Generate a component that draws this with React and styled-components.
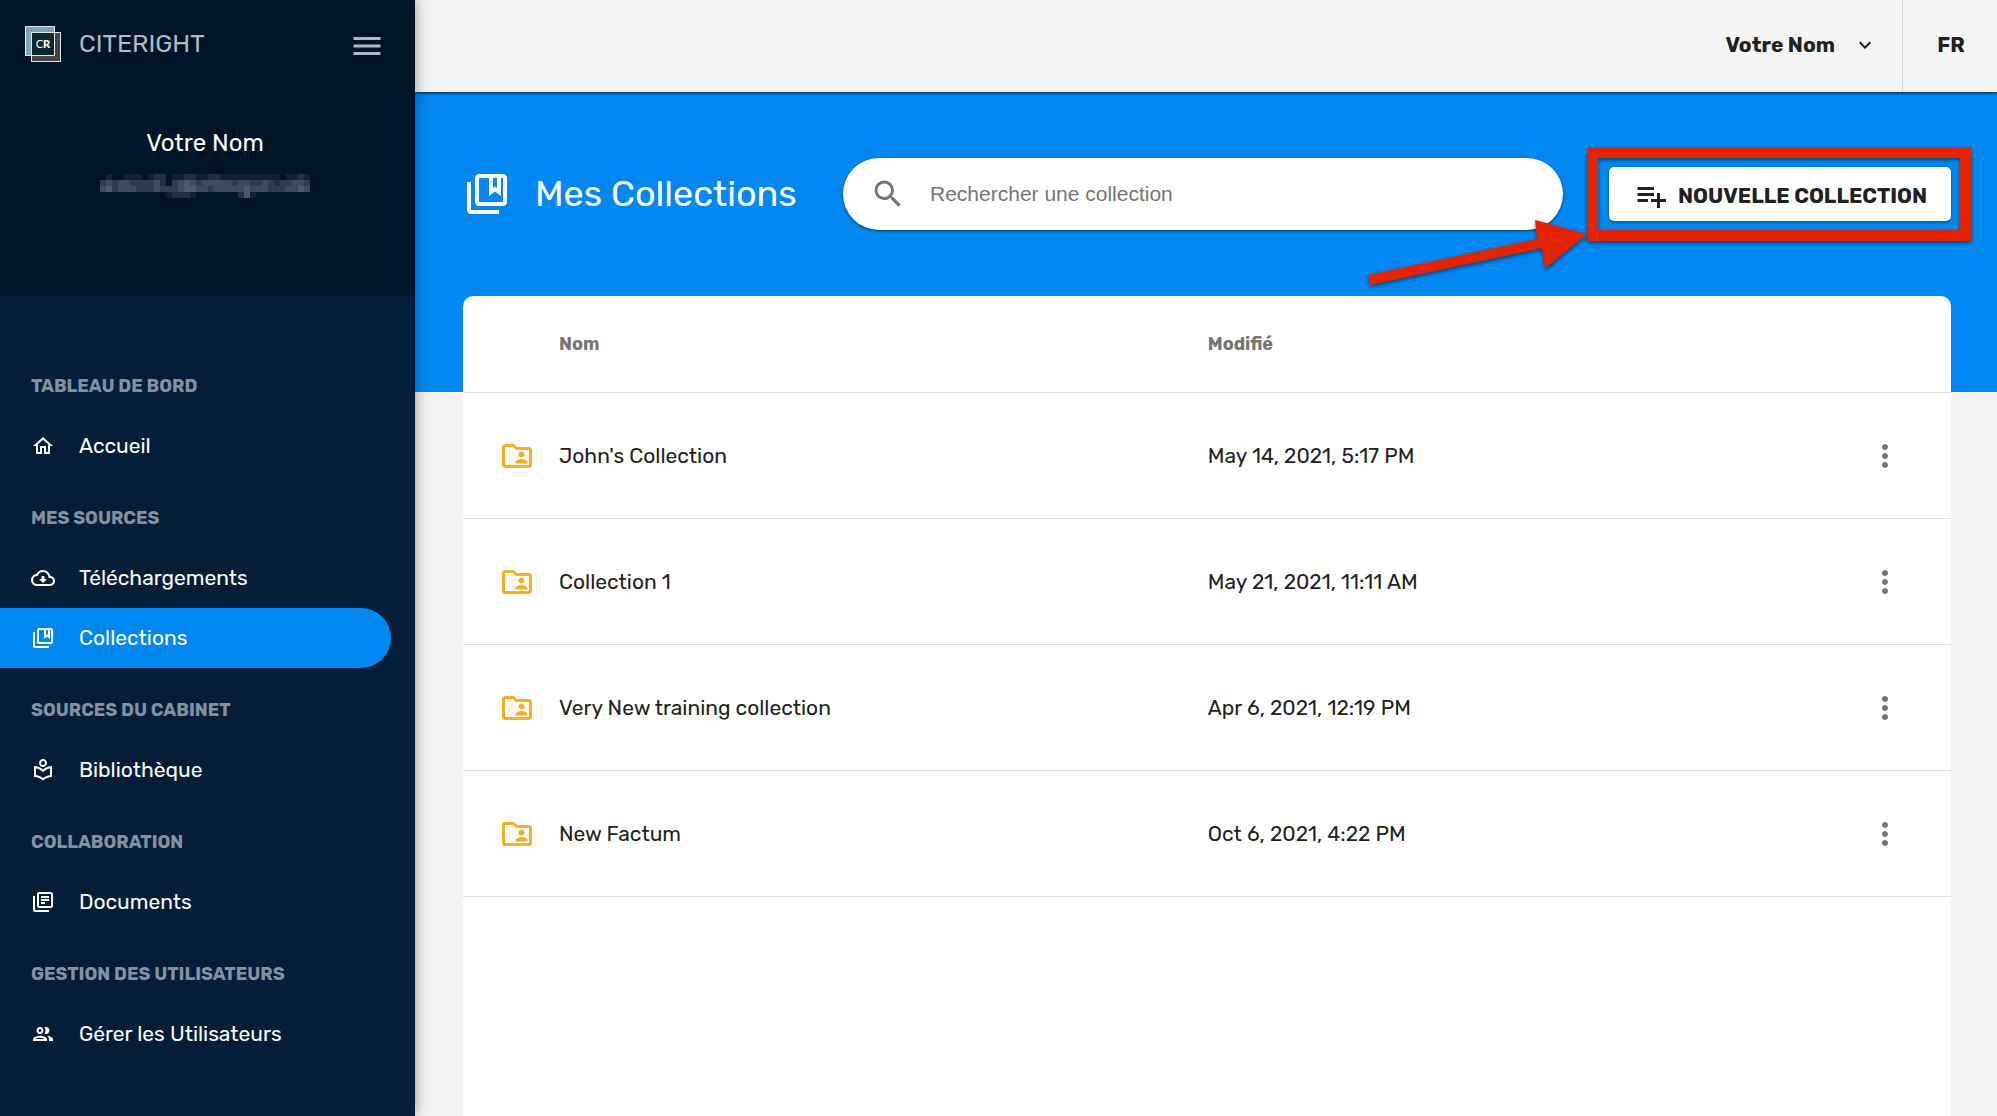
import styled, { createGlobalStyle, css } from "styled-components";
import { useState } from "react";
import {
  MdExpandMore,
  MdMenu,
  MdMoreVert,
  MdOutlineCloudDownload,
  MdOutlineCollectionsBookmark,
  MdOutlineFolderShared,
  MdOutlineGroup,
  MdOutlineHome,
  MdOutlineLibraryBooks,
  MdOutlineLocalLibrary,
  MdPlaylistAdd,
  MdSearch,
} from "react-icons/md";

const GlobalStyle = createGlobalStyle`
  *, *::before, *::after {
    box-sizing: border-box;
  }
  body {
    margin: 0;
    background: #f4f4f4;
    color: #212121;
    font-family: Rubik, Roboto, "Liberation Sans", sans-serif;
    font-size: 21px;
    line-height: 28px;
  }
  button, input {
    font: inherit;
    color: inherit;
  }
`;

const Page = styled.div`
  display: flex;
  min-height: 100vh;
`;

const plainButton = css`
  display: flex;
  align-items: center;
  padding: 0;
  border: none;
  background: none;
  cursor: pointer;
`;

const IconButton = styled.button`
  ${plainButton}
  color: ${props => props.$color};
  font-size: 36px;
`;

/* Sidebar */

const Sidebar = styled.aside`
  position: relative;
  z-index: 2;
  flex: 0 0 415px;
  background: #041e39;
  color: #ffffff;
  box-shadow: 0 0 14px rgba(0, 0, 0, 0.4);
`;

const SidebarHeader = styled.header`
  height: 296px;
  padding: 26px 30px 0 25px;
  background: #001429;
`;

const BrandRow = styled.div`
  display: flex;
  justify-content: space-between;
  align-items: flex-start;
  height: 38px;

  ${IconButton} {
    align-self: flex-end;
  }
`;

const Brand = styled.a`
  display: flex;
  align-items: center;
  gap: 18px;
  color: #b2b9c0;
  font-size: 25px;
  text-decoration: none;
`;

const Profile = styled.div`
  display: flex;
  flex-direction: column;
  align-items: center;
  gap: 17px;
  padding-top: 65px;
  font-size: 24px;
`;

const Nav = styled.nav`
  padding: 48px 24px 24px 0;
`;

const NavTitle = styled.h2`
  height: 72px;
  margin: 0;
  padding: 28px 0 0 31px;
  color: #83909e;
  font-size: 18px;
  font-weight: 700;
  text-transform: uppercase;
`;

const NavLink = styled.a`
  display: flex;
  align-items: center;
  gap: 24px;
  height: 60px;
  padding-left: 31px;
  border-radius: 0 30px 30px 0;
  background: ${props => (props.$active ? "#0388f2" : "transparent")};
  color: #ffffff;
  text-decoration: none;

  svg {
    font-size: 24px;
  }
`;

/* Main column */

const Content = styled.div`
  display: flex;
  flex: 1;
  flex-direction: column;
  min-width: 0;
`;

const TopBar = styled.header`
  position: relative;
  z-index: 1;
  display: flex;
  justify-content: flex-end;
  height: 92px;
  background: #f4f4f4;
  box-shadow: 0 1px 3px rgba(0, 0, 0, 0.8);
`;

const UserButton = styled.button`
  ${plainButton}
  gap: 18px;
  padding: 0 25px 2px 0;
  font-weight: 700;

  svg {
    font-size: 24px;
  }
`;

const LangButton = styled.button`
  ${plainButton}
  justify-content: center;
  width: 95px;
  padding: 0 0 2px 2px;
  border-left: 1px solid #d2d2d2;
  font-weight: 700;
`;

const Hero = styled.section`
  display: grid;
  grid-template-columns: 380px minmax(0, 1fr) 342px;
  align-items: start;
  height: 300px;
  padding: 66px 46px 0 48px;
  background: #0388f2;
`;

const Title = styled.h1`
  display: flex;
  align-items: center;
  gap: 24px;
  height: 72px;
  margin: 0;
  color: #ffffff;
  font-size: 36px;
  font-weight: 400;

  svg {
    font-size: 48px;
  }
`;

const SearchBox = styled.label`
  display: flex;
  align-items: center;
  gap: 24px;
  height: 72px;
  margin-right: 46px;
  padding: 0 27px;
  border-radius: 36px;
  background: #ffffff;
  color: #757575;
  box-shadow: 0 1px 3px rgba(0, 0, 0, 0.6);

  svg {
    flex: none;
    font-size: 36px;
  }
`;

const SearchInput = styled.input`
  flex: 1;
  min-width: 0;
  padding: 0;
  border: none;
  outline: none;
  background: none;
  color: #212121;
  font-family: "Liberation Sans", Arial, sans-serif;

  &::placeholder {
    color: #757575;
    opacity: 1;
  }
`;

const Callout = styled.div`
  position: relative;
  display: flex;
  align-items: center;
  height: 72px;

  &::after {
    content: "";
    position: absolute;
    inset: -11px -20px -11px -22px;
    border: 11px solid #e22400;
    filter: drop-shadow(0 2px 2px rgba(0, 0, 0, 0.5));
    pointer-events: none;
  }
`;

const CalloutArrow = styled.svg`
  position: absolute;
  top: 58px;
  right: 364px;
  z-index: 1;
  filter: drop-shadow(0 2px 2px rgba(0, 0, 0, 0.5));
  pointer-events: none;
`;

const NewButton = styled.button`
  ${plainButton}
  flex: 1;
  justify-content: center;
  gap: 9px;
  height: 54px;
  padding-top: 4px;
  border-radius: 5px;
  background: #ffffff;
  font-weight: 700;
  text-transform: uppercase;
  white-space: nowrap;
  box-shadow: 0 1px 3px rgba(0, 0, 0, 0.5);

  svg {
    font-size: 36px;
  }
`;

const Card = styled.main`
  flex: 1;
  margin: -96px 46px 0 48px;
  border-radius: 10px 10px 0 0;
  background: #ffffff;
`;

const Table = styled.table`
  width: 100%;
  border-collapse: separate;
  border-spacing: 0;
  table-layout: fixed;
`;

const HeadCell = styled.th`
  width: ${props => props.$width};
  height: 97px;
  padding: 0;
  border-bottom: 1px solid #dddddd;
  color: #757575;
  font-size: 18px;
  font-weight: 700;
  text-align: left;
`;

const Cell = styled.td`
  height: 126px;
  padding: ${props => (props.$icon ? "0 0 0 36px" : "0")};
  border-bottom: 1px solid #dddddd;

  > svg {
    display: block;
    color: #fab01e;
    font-size: 36px;
  }

  ${IconButton} {
    margin: 0 auto;
  }
`;

const sections = [
  { title: "Tableau de bord", links: [{ label: "Accueil", icon: MdOutlineHome }] },
  {
    title: "Mes sources",
    links: [
      { label: "Téléchargements", icon: MdOutlineCloudDownload },
      { label: "Collections", icon: MdOutlineCollectionsBookmark },
    ],
  },
  { title: "Sources du cabinet", links: [{ label: "Bibliothèque", icon: MdOutlineLocalLibrary }] },
  { title: "Collaboration", links: [{ label: "Documents", icon: MdOutlineLibraryBooks }] },
  { title: "Gestion des utilisateurs", links: [{ label: "Gérer les Utilisateurs", icon: MdOutlineGroup }] },
];

const collections = [
  { name: "John's Collection", modified: "May 14, 2021, 5:17 PM" },
  { name: "Collection 1", modified: "May 21, 2021, 11:11 AM" },
  { name: "Very New training collection", modified: "Apr 6, 2021, 12:19 PM" },
  { name: "New Factum", modified: "Oct 6, 2021, 4:22 PM" },
];

// opacity of each block of the masked address, 0-9
const mask = [
  "01001110122011221122111111111101121",
  "34344333342034543444443443343233443",
  "45344433343334554434444454443334454",
  "00000000000122210000000251000000000",
];

function Logo() {
  return (
    <svg width="36" height="36" viewBox="0 0 36 36" aria-hidden="true">
      <rect x="0.5" y="0.5" width="29" height="29" fill="#7fa4b5" />
      <rect x="6.5" y="6.5" width="29" height="29" fill="#454545" />
      <rect x="6.5" y="6.5" width="23" height="23" fill="#0c262f" />
      <rect x="0.5" y="0.5" width="29" height="29" fill="none" stroke="#dfe8ee" />
      <rect x="6.5" y="6.5" width="29" height="29" fill="none" stroke="#dfe8ee" />
      <text x="18" y="22" textAnchor="middle" fontFamily="Lato, sans-serif" fontSize="11" fill="#ffffff">
        <tspan fontWeight="400">C</tspan>
        <tspan fontWeight="900">R</tspan>
      </text>
    </svg>
  );
}

function MaskedEmail() {
  return (
    <svg width="210" height="24" viewBox="0 0 210 24" shapeRendering="crispEdges" role="img" aria-label="Adresse masquée">
      {mask.map((line, y) =>
        line.split("").map((level, x) => (
          <rect key={`${x}-${y}`} x={x * 6} y={y * 6} width="6" height="6" fill="#ffffff" opacity={level * 0.06} />
        ))
      )}
    </svg>
  );
}

export default function App() {
  const [active, setActive] = useState("Collections");
  const [search, setSearch] = useState("");

  const rows = collections.filter(c => c.name.toLowerCase().includes(search.toLowerCase()));

  return (
    <Page>
      <GlobalStyle />
      <Sidebar>
        <SidebarHeader>
          <BrandRow>
            <Brand href="#">
              <Logo />
              CITERIGHT
            </Brand>
            <IconButton $color="#b2b9c0" aria-label="Menu">
              <MdMenu />
            </IconButton>
          </BrandRow>
          <Profile>
            Votre Nom
            <MaskedEmail />
          </Profile>
        </SidebarHeader>
        <Nav>
          {sections.map(section => (
            <div key={section.title}>
              <NavTitle>{section.title}</NavTitle>
              {section.links.map(({ label, icon: Icon }) => (
                <NavLink key={label} href="#" $active={label === active} onClick={() => setActive(label)}>
                  <Icon />
                  {label}
                </NavLink>
              ))}
            </div>
          ))}
        </Nav>
      </Sidebar>
      <Content>
        <TopBar>
          <UserButton>
            Votre Nom
            <MdExpandMore />
          </UserButton>
          <LangButton>FR</LangButton>
        </TopBar>
        <Hero>
          <Title>
            <MdOutlineCollectionsBookmark />
            Mes Collections
          </Title>
          <SearchBox>
            <MdSearch />
            <SearchInput
              type="text"
              aria-label="Rechercher une collection"
              placeholder="Rechercher une collection"
              value={search}
              onChange={e => setSearch(e.target.value)}
            />
          </SearchBox>
          <Callout>
            <NewButton>
              <MdPlaylistAdd />
              Nouvelle collection
            </NewButton>
            <CalloutArrow width="220" height="70" viewBox="0 0 220 70" aria-hidden="true">
              <path d="M1 59 L170 23 L168 4 L220 18 L178 53 L175 32 L3 69 Z" fill="#e22400" />
            </CalloutArrow>
          </Callout>
        </Hero>
        <Card>
          <Table>
            <thead>
              <tr>
                <HeadCell $width="96px" aria-label="Type" />
                <HeadCell $width="43.6%">Nom</HeadCell>
                <HeadCell>Modifié</HeadCell>
                <HeadCell $width="132px" aria-label="Actions" />
              </tr>
            </thead>
            <tbody>
              {rows.map(row => (
                <tr key={row.name}>
                  <Cell $icon>
                    <MdOutlineFolderShared />
                  </Cell>
                  <Cell>{row.name}</Cell>
                  <Cell>{row.modified}</Cell>
                  <Cell>
                    <IconButton $color="#757575" aria-label={`Options de ${row.name}`}>
                      <MdMoreVert />
                    </IconButton>
                  </Cell>
                </tr>
              ))}
            </tbody>
          </Table>
        </Card>
      </Content>
    </Page>
  );
}
